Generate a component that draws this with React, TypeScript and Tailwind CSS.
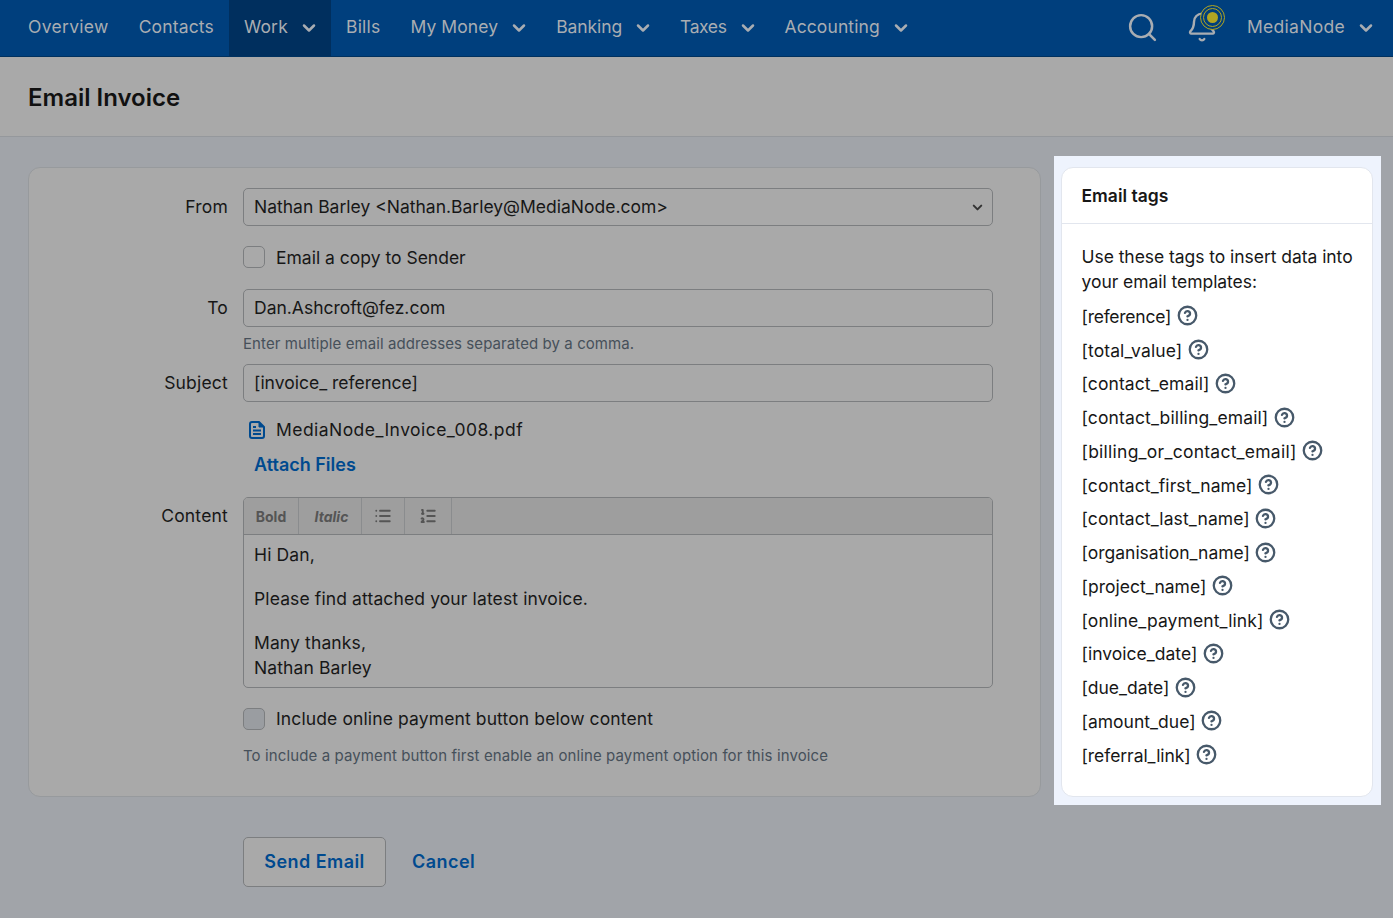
import { Bell, ChevronDown, CircleHelp, List, ListOrdered, Search } from "lucide-react";

const navItems = [
  { label: "Overview", fit: "tracking-[0.3px]" },
  { label: "Contacts", fit: "tracking-[0.15px]" },
  { label: "Work", caret: true, active: true, fit: "tracking-[0.2px]" },
  { label: "Bills", fit: "tracking-[0.2px]" },
  { label: "My Money", caret: true, fit: "tracking-[0.1px]" },
  { label: "Banking", caret: true, fit: "tracking-[-0.1px]" },
  { label: "Taxes", caret: true, fit: "tracking-[-0.4px]" },
  { label: "Accounting", caret: true, fit: "tracking-[0.1px]" },
];

const tags = [
  { name: "[reference]", fit: "tracking-[-0.25px]" },
  { name: "[total_value]", fit: "tracking-[0.1px]" },
  { name: "[contact_email]", fit: "tracking-[0.1px]" },
  { name: "[contact_billing_email]", fit: "tracking-[0.13px]" },
  { name: "[billing_or_contact_email]", fit: "tracking-[0.25px]" },
  { name: "[contact_first_name]", fit: "tracking-[0.1px]" },
  { name: "[contact_last_name]", fit: "tracking-[0.1px]" },
  { name: "[organisation_name]", fit: "tracking-[0px]" },
  { name: "[project_name]", fit: "tracking-[0.03px]" },
  { name: "[online_payment_link]", fit: "tracking-[0.1px]" },
  { name: "[invoice_date]", fit: "tracking-[0.02px]" },
  { name: "[due_date]", fit: "tracking-[0px]" },
  { name: "[amount_due]", fit: "tracking-[0.02px]" },
  { name: "[referral_link]", fit: "tracking-[-0.05px]" },
];

function Row({ label, className, children }: { label?: string; className?: string; children: React.ReactNode }) {
  return (
    <div className={"flex " + (className || "")}>
      <div className="w-[199px] shrink-0 pr-[15px] text-right leading-[38px] tracking-[0.2px] text-[#171717]">{label}</div>
      <div className="w-[750px]">{children}</div>
    </div>
  );
}

function Field({ children }: { children: React.ReactNode }) {
  return (
    <div className="flex h-[38px] items-center rounded-[5px] border border-[#7c7e80] px-[10px] text-[#171717]">
      {children}
    </div>
  );
}

function DocIcon() {
  return (
    <svg width="16" height="18" viewBox="0 0 16 18" fill="none" stroke="#004a8f" strokeWidth="2" className="mr-[11px] shrink-0">
      <path d="M3 1h7l5 5v9a2 2 0 0 1-2 2H3a2 2 0 0 1-2-2V3a2 2 0 0 1 2-2z" strokeLinejoin="round" />
      <path d="M10 1v5h5" fill="#004a8f" strokeWidth="1" />
      <path d="M4 6h3M4 9.5h8M4 13h8" strokeWidth="2" />
    </svg>
  );
}

export default function App() {
  return (
    <div className="min-h-[918px] bg-[#a1a4a9] font-['Inter',sans-serif] text-[17.5px] text-[#171717]">
      <nav className="flex h-[57px] items-stretch justify-between border-b border-[#00315f] bg-[#003f7d] pl-[13px] pr-[17px] text-[#a9adb2]">
        <div className="flex">
          {navItems.map((item) => (
            <div
              key={item.label}
              className={"flex items-center px-[15px] pb-[2px] " + item.fit + " " + (item.active ? "bg-[#002f5e]" : "")}
            >
              {item.label}
              {item.caret && <ChevronDown size={20} strokeWidth={3} className="ml-[11px] -mr-[3px] mt-[2px]" />}
            </div>
          ))}
        </div>
        <div className="flex items-center pb-[2px] tracking-[0.3px]">
          <Search size={33} strokeWidth={1.8} className="mr-[27px]" />
          <div className="relative mr-[29px]">
            <Bell size={32} strokeWidth={1.8} />
            <div className="absolute -right-[7px] -top-[6px] flex h-[25px] w-[25px] items-center justify-center rounded-full border border-[#b1a522] bg-[#003f7d]">
              <div className="flex h-[19px] w-[19px] items-center justify-center rounded-full border border-[#b1a522]">
                <div className="h-[11px] w-[11px] rounded-full bg-[#b1a522]" />
              </div>
            </div>
          </div>
          MediaNode
          <ChevronDown size={20} strokeWidth={3} className="ml-[11px] mt-[2px]" />
        </div>
      </nav>

      <header className="flex h-[80px] items-center border-b border-[#95989c] bg-[#a9a9a9] pl-[28px] pt-[2px]">
        <h1 className="text-[24px] font-semibold text-[#111]">Email Invoice</h1>
      </header>

      <div className="flex items-start pl-[28px] pt-[19px]">
        <div className="w-[1013px] shrink-0">
          <div className="mt-[11px] h-[630px] rounded-[12px] border border-[#979a9d] bg-[#a9a9a9] pt-[20px] pl-[15px]">
            <Row label="From">
              <div className="flex h-[38px] items-center justify-between rounded-[5px] border border-[#7c7e80] pl-[10px] pr-[7px]">
                Nathan Barley &lt;Nathan.Barley@MediaNode.com&gt;
                <ChevronDown size={15} strokeWidth={3.2} className="text-[#333]" />
              </div>
              <label className="mt-[20px] flex h-[22px] items-center">
                <span className="mr-[11px] h-[22px] w-[22px] rounded-[5px] border border-[#7c7e80]" />
                <span className="pt-[2px]">Email a copy to Sender</span>
              </label>
            </Row>
            <Row label="To" className="mt-[21px]">
              <Field>Dan.Ashcroft@fez.com</Field>
              <p className="mt-[7px] text-[15px] leading-[20px] tracking-[0.08px] text-[#46505a]">
                Enter multiple email addresses separated by a comma.
              </p>
            </Row>
            <Row label="Subject" className="mt-[10px]">
              <Field>[invoice_ reference]</Field>
              <div className="mt-[16px] flex h-[24px] items-center pl-[6px] tracking-[0.45px]">
                <DocIcon />
                MediaNode_Invoice_008.pdf
              </div>
              <a className="mt-[9px] block pl-[11px] text-[18px] font-semibold text-[#004a8f]">Attach Files</a>
            </Row>
            <Row label="Content" className="mt-[19px]">
              <div className="h-[191px] overflow-hidden rounded-[5px] border border-[#7c7e80]">
                <div className="flex h-[37px] border-b border-[#7c7e80] bg-[#9e9e9e] text-[14px] text-[#555]">
                  <div className="flex w-[55px] items-center justify-center border-r border-[#8a8c8e] font-bold">Bold</div>
                  <div className="flex w-[63px] items-center justify-center border-r border-[#8a8c8e] pl-[3px] font-bold italic">Italic</div>
                  <div className="flex w-[43px] items-center justify-center border-r border-[#8a8c8e]">
                    <List size={18} strokeWidth={2.5} />
                  </div>
                  <div className="flex w-[47px] items-center justify-center border-r border-[#8a8c8e]">
                    <ListOrdered size={18} strokeWidth={2.5} />
                  </div>
                </div>
                <div className="px-[10px] pt-[9px] leading-[22px] tracking-[0.12px]">
                  <p>Hi Dan,</p>
                  <p className="mt-[22px]">Please find attached your latest invoice.</p>
                  <p className="mt-[22px]">Many thanks,</p>
                  <p className="mt-[3px]">Nathan Barley</p>
                </div>
              </div>
              <label className="mt-[20px] flex h-[22px] items-center tracking-[0.12px]">
                <span className="mr-[11px] h-[22px] w-[22px] rounded-[5px] border border-[#7c7e80] bg-[#9a9da1]" />
                <span className="pt-[1px]">Include online payment button below content</span>
              </label>
              <p className="mt-[16px] text-[15px] leading-[20px] tracking-[0.11px] text-[#46505a]">
                To include a payment button first enable an online payment option for this invoice
              </p>
            </Row>
          </div>
          <div className="mt-[40px] flex items-center pl-[215px] text-[18px] font-semibold tracking-[0.45px] text-[#004a8f]">
            <button className="h-[50px] w-[143px] rounded-[5px] border border-[#7c7e80] bg-[#a9a9a9] pb-[2px]">Send Email</button>
            <a className="mb-[2px] ml-[26px]">Cancel</a>
          </div>
        </div>

        <div className="ml-[13px] w-[327px] bg-[#eef3fd] pb-[8px] pl-[7px] pr-[8px] pt-[11px]">
          <div className="h-[630px] rounded-[12px] border border-[#e2e6ee] bg-white">
            <div className="flex h-[56px] items-center border-b border-[#e2e6ee] pl-[19.5px] pt-[1px] font-semibold">Email tags</div>
            <div className="pl-[19.5px] pt-[20px]">
              <p className="w-[280px] leading-[25px] tracking-[-0.05px]">Use these tags to insert data into your email templates:</p>
              <ul className="mt-[6px]">
                {tags.map((tag) => (
                  <li key={tag.name} className={"flex h-[33.75px] items-center " + tag.fit}>
                    {tag.name}
                    <CircleHelp size={21} strokeWidth={2.6} className="ml-[5.5px] -translate-y-px text-[#47596a]" />
                  </li>
                ))}
              </ul>
            </div>
          </div>
        </div>
      </div>
    </div>
  );
}
